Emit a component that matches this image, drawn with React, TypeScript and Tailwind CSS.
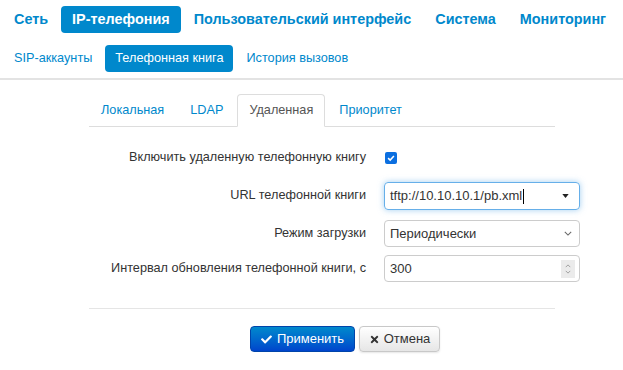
import React from 'react';
import { FaCheck, FaTimes } from 'react-icons/fa';

/* ------------------------------------------------------------------
 * navigation data
 * ---------------------------------------------------------------- */
const topMenu = ['Сеть', 'IP-телефония', 'Пользовательский интерфейс', 'Система', 'Мониторинг'];
const subMenu = ['SIP-аккаунты', 'Телефонная книга', 'История вызовов'];
const tabs = ['Локальная', 'LDAP', 'Удаленная', 'Приоритет'];

const font = { fontFamily: '"Liberation Sans", Arial, sans-serif' };

/* ------------------------------------------------------------------
 * form row
 * ---------------------------------------------------------------- */
const Row: React.FC<{ label: string; className?: string; children: React.ReactNode }> = ({
  label,
  className = '',
  children,
}) => (
  <div className={`flex items-center ${className}`}>
    <label className="w-[277px] shrink-0 text-right text-[12.7px] text-[#333]">{label}</label>
    <div className="ml-[18px] w-[196px] shrink-0">{children}</div>
  </div>
);

export default function App() {
  return (
    <div className="h-[370px] w-[623px] overflow-hidden bg-white" style={font}>
      {/* top menu */}
      <nav className="flex gap-[2px] pl-[3px] pt-[6px]">
        {topMenu.map((item) => (
          <a
            key={item}
            className={`flex h-[27px] items-center rounded-[4px] px-[11px] text-[14.4px] font-bold ${
              item === 'IP-телефония' ? 'bg-[#0088cc] text-white' : 'text-[#0088cc]'
            }`}
          >
            {item}
          </a>
        ))}
      </nav>

      {/* sub menu */}
      <nav className="mt-[12px] flex gap-[3px] pl-[4px]">
        {subMenu.map((item) => (
          <a
            key={item}
            className={`flex h-[27px] items-center rounded-[4px] px-[10px] text-[12.7px] ${
              item === 'Телефонная книга' ? 'bg-[#0088cc] text-white' : 'text-[#0088cc]'
            }`}
          >
            {item}
          </a>
        ))}
      </nav>

      <div className="mt-[6px] h-[2px] w-full bg-[#e3e3e3]" />

      {/* tabs */}
      <div className="ml-[89px] mt-[14px] w-[466px]">
        <ul className="flex border-b border-[#ddd]">
          {tabs.map((tab) => (
            <li
              key={tab}
              className={`-mb-px mr-[2px] flex h-[33px] items-center rounded-t-[4px] border px-[11px] text-[12.7px] ${
                tab === 'Удаленная'
                  ? 'border-[#ddd] border-b-white bg-white text-[#555]'
                  : 'border-transparent text-[#0088cc]'
              }`}
            >
              {tab}
            </li>
          ))}
        </ul>
      </div>

      {/* form */}
      <div className="ml-[89px] mt-[18px]">
        <Row label="Включить удаленную телефонную книгу" className="h-[26px]">
          <span className="ml-[1px] flex h-[12px] w-[12px] items-center justify-center rounded-[2px] bg-[#0b6fe0]">
            <svg viewBox="0 0 12 12" className="h-[10px] w-[10px]">
              <path d="M2.5 6.2 L5 8.5 L9.5 3.5" fill="none" stroke="white" strokeWidth="1.8" />
            </svg>
          </span>
        </Row>

        <Row label="URL телефонной книги" className="mt-[11px]">
          <div className="flex h-[28px] items-center rounded-[4px] border border-[#66afe9] pl-[5px] pr-[10px] text-[13px] text-[#333] shadow-[0_0_6px_rgba(102,175,233,0.6)]">
            <span>tftp://10.10.10.1/pb.xml</span>
            <span className="ml-[1px] h-[15px] w-px bg-black" />
            <svg viewBox="0 0 8 5" className="ml-auto h-[4px] w-[7px]">
              <path d="M0 0 H8 L4 5 Z" fill="#222" />
            </svg>
          </div>
        </Row>

        <Row label="Режим загрузки" className="mt-[10px]">
          <div className="flex h-[27px] items-center rounded-[4px] border border-[#ccc] pl-[5px] pr-[7px] text-[13px] text-[#333]">
            <span>Периодически</span>
            <svg viewBox="0 0 10 6" className="ml-auto h-[5px] w-[8px]">
              <path d="M1 1 L5 5 L9 1" fill="none" stroke="#666" strokeWidth="1.3" />
            </svg>
          </div>
        </Row>

        <Row label="Интервал обновления телефонной книги, с" className="mt-[8px]">
          <div className="flex h-[27px] items-center rounded-[4px] border border-[#ccc] pl-[5px] pr-[4px] text-[13px] text-[#333]">
            <span>300</span>
            <span className="ml-auto flex h-[18px] w-[14px] flex-col items-center justify-center gap-[2px] bg-[#ebebeb]">
              <svg viewBox="0 0 8 5" className="h-[4px] w-[6px]">
                <path d="M1 4 L4 1 L7 4" fill="none" stroke="#888" strokeWidth="1" />
              </svg>
              <svg viewBox="0 0 8 5" className="h-[4px] w-[6px]">
                <path d="M1 1 L4 4 L7 1" fill="none" stroke="#888" strokeWidth="1" />
              </svg>
            </span>
          </div>
        </Row>
      </div>

      <div className="ml-[89px] mt-[26px] h-px w-[466px] bg-[#e5e5e5]" />

      {/* actions */}
      <div className="ml-[250px] mt-[17px] flex gap-[4px]">
        <button className="flex h-[26px] w-[105px] items-center justify-center gap-[5px] rounded-[4px] border border-[#0044aa] bg-gradient-to-b from-[#0088cc] to-[#0044cc] text-[13px] text-white">
          <FaCheck className="h-[11px] w-[11px]" />
          Применить
        </button>
        <button className="flex h-[26px] w-[81px] items-center justify-center gap-[4px] rounded-[4px] border border-[#c8c8c8] bg-gradient-to-b from-white to-[#e6e6e6] text-[13px] text-[#333] shadow-[0_1px_2px_rgba(0,0,0,0.1)]">
          <FaTimes className="h-[11px] w-[11px]" />
          Отмена
        </button>
      </div>
    </div>
  );
}
